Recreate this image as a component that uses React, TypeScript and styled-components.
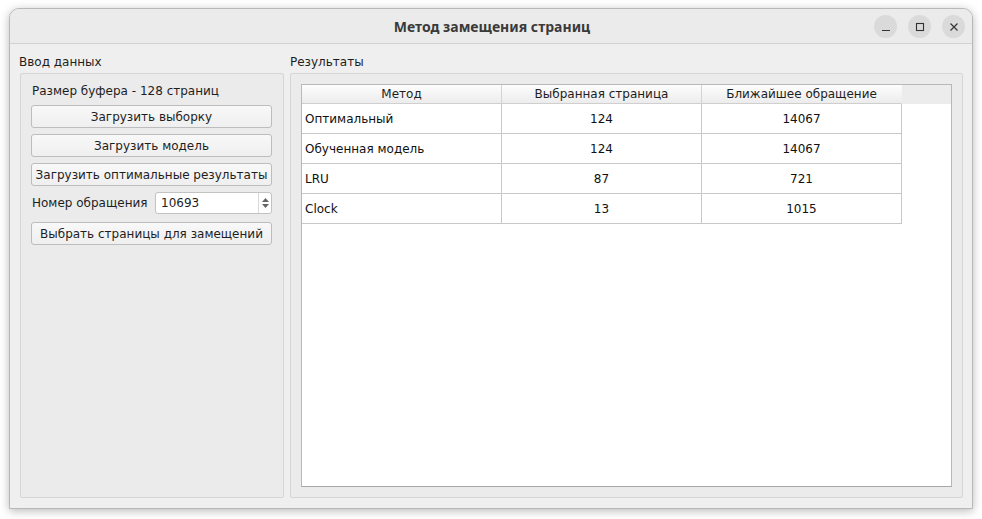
import React from "react";
import styled, { createGlobalStyle } from "styled-components";

const Global = createGlobalStyle`
  html, body { margin: 0; padding: 0; background: #ffffff; }
  body { padding: 8px 9px 10px 9px; font-family: "DejaVu Sans", "Noto Sans", sans-serif; }
  * { box-sizing: border-box; }
`;

const Window = styled.div`
  width: 964px;
  height: 501px;
  background: #efefef;
  border: 1px solid #b8b8b8;
  border-radius: 10px 10px 0 0;
  box-shadow: 0 2px 10px rgba(0, 0, 0, 0.28);
  display: flex;
  flex-direction: column;
  overflow: hidden;
`;

const TitleBar = styled.div`
  height: 35px;
  flex: none;
  background: #ebebeb;
  border-bottom: 1px solid #d2d2d2;
  display: flex;
  align-items: center;
  justify-content: center;
  position: relative;
`;

const Title = styled.div`
  font-family: "Noto Sans", "DejaVu Sans", sans-serif;
  font-weight: 700;
  font-size: 14px;
  color: #3a3a3a;
  letter-spacing: 0px;
  padding-left: 2px;
`;

const Controls = styled.div`
  position: absolute;
  right: 7px;
  top: 6px;
  display: flex;
  gap: 11px;
`;

const CtrlButton = styled.div`
  width: 23px;
  height: 23px;
  border-radius: 50%;
  background: #dadada;
  display: flex;
  align-items: center;
  justify-content: center;
  color: #333;
`;

const Body = styled.div`
  flex: 1;
  display: flex;
  gap: 6px;
  padding: 10px 9px 10px 9px;
  min-height: 0;
`;

const Group = styled.div<{ $w?: number }>`
  display: flex;
  flex-direction: column;
  ${(p) => (p.$w ? `width: ${p.$w}px; flex: none;` : "flex: 1;")}
`;

const GroupLabel = styled.div`
  font-size: 12px;
  color: #1e1e1e;
  height: 19px;
  line-height: 17px;
`;

const Frame = styled.div`
  flex: 1;
  border: 1px solid #d6d6d6;
  border-radius: 2px;
  background: #ebebeb;
  padding: 10px;
  display: flex;
  flex-direction: column;
  min-height: 0;
`;

const LeftFrame = styled(Frame)`
  margin-left: 1px;
  padding: 9px 11px 10px 10px;
  gap: 6px;
`;

const InfoText = styled.div`
  font-size: 12px;
  color: #1e1e1e;
  height: 16px;
  line-height: 16px;
  padding-left: 1px;
`;

const Button = styled.button`
  height: 23px;
  width: 100%;
  font-family: "DejaVu Sans", sans-serif;
  font-size: 12px;
  color: #1e1e1e;
  background: linear-gradient(#f8f8f8, #efefef);
  border: 1px solid #bdbdbd;
  border-radius: 3px;
  padding: 0;
  white-space: nowrap;
`;

const SpinRow = styled.div`
  display: flex;
  align-items: center;
  justify-content: space-between;
  height: 22px;
  margin-bottom: 2px;
`;

const SpinBox = styled.div`
  width: 117px;
  height: 22px;
  background: #ffffff;
  border: 1px solid #c2c2c2;
  border-radius: 3px;
  display: flex;
  align-items: center;
  font-size: 12px;
  color: #1e1e1e;
`;

const SpinValue = styled.div`
  flex: 1;
  padding-left: 5px;
`;

const SpinArrows = styled.div`
  width: 13px;
  height: 100%;
  border-left: 1px solid #d8d8d8;
  display: flex;
  flex-direction: column;
  align-items: center;
  justify-content: center;
  gap: 2px;
`;

const Table = styled.div`
  flex: 1;
  background: #ffffff;
  border: 1px solid #b8b8b8;
  border-bottom-color: #a8a8a8;
  display: flex;
  flex-direction: column;
`;

const HeaderRow = styled.div`
  display: flex;
  height: 19px;
  background: #ececec;
`;

const HeaderCell = styled.div<{ $last?: boolean }>`
  width: 200px;
  flex: none;
  background: linear-gradient(#fdfdfd, #ececec);
  border-right: 1px solid ${(p) => (p.$last ? "transparent" : "#d4d4d4")};
  border-bottom: 1px solid #cfcfcf;
  font-size: 12px;
  color: #1e1e1e;
  text-align: center;
  line-height: 18px;
`;

const Row = styled.div`
  display: flex;
  height: 30px;
`;

const Cell = styled.div<{ $left?: boolean }>`
  width: 200px;
  flex: none;
  border-right: 1px solid #c8c8c8;
  border-bottom: 1px solid #c8c8c8;
  font-size: 12px;
  color: #111;
  display: flex;
  align-items: center;
  justify-content: ${(p) => (p.$left ? "flex-start" : "center")};
  padding-left: ${(p) => (p.$left ? "3px" : "0")};
`;

const rows = [
  ["Оптимальный", "124", "14067"],
  ["Обученная модель", "124", "14067"],
  ["LRU", "87", "721"],
  ["Clock", "13", "1015"],
];

export default function App() {
  return (
    <>
      <Global />
      <Window>
        <TitleBar>
          <Title>Метод замещения страниц</Title>
          <Controls>
            <CtrlButton>
              <svg width="10" height="10" viewBox="0 0 10 10">
                <path d="M1 8.5h8" stroke="#333" strokeWidth="1.2" />
              </svg>
            </CtrlButton>
            <CtrlButton>
              <svg width="10" height="10" viewBox="0 0 10 10">
                <rect x="1.5" y="1.5" width="7" height="7" fill="none" stroke="#333" strokeWidth="1.1" />
              </svg>
            </CtrlButton>
            <CtrlButton>
              <svg width="10" height="10" viewBox="0 0 10 10">
                <path d="M1.5 1.5l7 7M8.5 1.5l-7 7" stroke="#333" strokeWidth="1.2" />
              </svg>
            </CtrlButton>
          </Controls>
        </TitleBar>
        <Body>
          <Group $w={265}>
            <GroupLabel>Ввод данных</GroupLabel>
            <LeftFrame>
              <InfoText>Размер буфера - 128 страниц</InfoText>
              <Button>Загрузить выборку</Button>
              <Button>Загрузить модель</Button>
              <Button>Загрузить оптимальные результаты</Button>
              <SpinRow>
                <InfoText>Номер обращения</InfoText>
                <SpinBox>
                  <SpinValue>10693</SpinValue>
                  <SpinArrows>
                    <svg width="7" height="4" viewBox="0 0 7 4">
                      <path d="M0 4L3.5 0L7 4z" fill="#666" />
                    </svg>
                    <svg width="7" height="4" viewBox="0 0 7 4">
                      <path d="M0 0L3.5 4L7 0z" fill="#666" />
                    </svg>
                  </SpinArrows>
                </SpinBox>
              </SpinRow>
              <Button>Выбрать страницы для замещений</Button>
            </LeftFrame>
          </Group>
          <Group>
            <GroupLabel>Результаты</GroupLabel>
            <Frame>
              <Table>
                <HeaderRow>
                  <HeaderCell>Метод</HeaderCell>
                  <HeaderCell>Выбранная страница</HeaderCell>
                  <HeaderCell $last>Ближайшее обращение</HeaderCell>
                </HeaderRow>
                {rows.map((r) => (
                  <Row key={r[0]}>
                    <Cell $left>{r[0]}</Cell>
                    <Cell>{r[1]}</Cell>
                    <Cell>{r[2]}</Cell>
                  </Row>
                ))}
              </Table>
            </Frame>
          </Group>
        </Body>
      </Window>
    </>
  );
}
